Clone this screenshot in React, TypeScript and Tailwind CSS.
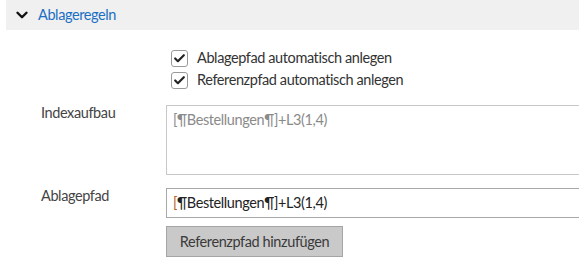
import { ChevronDown, Check } from "lucide-react";

function CheckRow({ label }: { label: string }) {
  return (
    <label className="flex items-center gap-[9px] h-[22px]">
      <span className="flex h-[17px] w-[17px] items-center justify-center rounded-[3px] border border-[#9a9a9a] bg-white">
        <Check className="h-[13px] w-[13px] text-[#222]" strokeWidth={4} />
      </span>
      <span className="text-[#333]">{label}</span>
    </label>
  );
}

export default function App() {
  return (
    <div
      className="h-[261px] w-[579px] overflow-hidden bg-white text-[14.5px] tracking-[-0.4px]"
      style={{ fontFamily: "Lato, 'Noto Sans', sans-serif" }}
    >
      <div className="ml-[6px] flex h-[30px] items-center gap-[7px] bg-[#f0f0f0] pl-[7px]">
        <ChevronDown className="h-[18px] w-[18px] text-[#111]" strokeWidth={3.2} />
        <span className="text-[#1a6fc4]">Ablageregeln</span>
      </div>

      <div className="pl-[166px] pt-[17px]">
        <div className="flex flex-col pl-[5px]">
          <CheckRow label="Ablagepfad automatisch anlegen" />
          <CheckRow label="Referenzpfad automatisch anlegen" />
        </div>
      </div>

      <div className="mt-[14px] flex">
        <div className="-mt-[3px] w-[166px] shrink-0 pl-[41px] text-[#444]">Indexaufbau</div>
        <div className="h-[70px] w-[440px] shrink-0 border border-[#c8c8c8] px-[6px] py-[3px] text-[#8a8a8a]">
          [¶Bestellungen¶]+L3(1,4)
        </div>
      </div>

      <div className="mt-[13px] flex">
        <div className="-mt-[3px] w-[166px] shrink-0 pl-[41px] text-[#444]">Ablagepfad</div>
        <div className="flex flex-col">
          <div className="flex h-[30px] w-[440px] items-center border border-[#a8a8a8] px-[6px] text-[#222]">
            <span className="text-[#b8601e]">[</span>¶Bestellungen¶]+L3(1,4)
          </div>
          <button className="mt-[8px] h-[31px] w-[177px] border border-[#a5a5a5] bg-[#c9c9c9] text-[#3a3a3a]">
            Referenzpfad hinzufügen
          </button>
        </div>
      </div>
    </div>
  );
}
